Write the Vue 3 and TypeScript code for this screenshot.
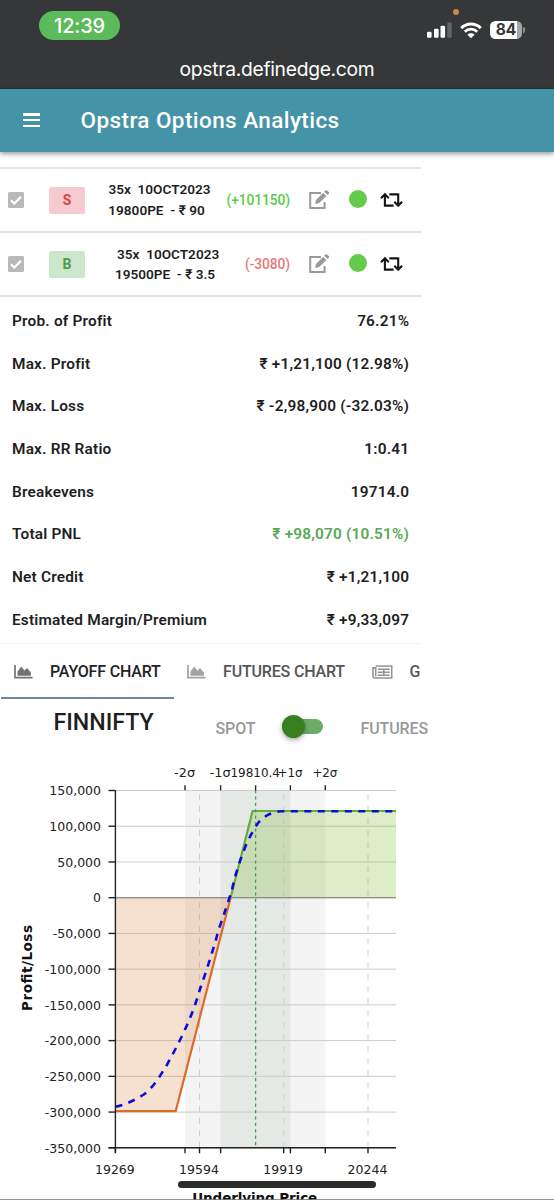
<script setup lang="ts">
interface Leg {
  side: 'S' | 'B'
  expiry: string
  strike: string
  pnl: string
}

interface Stat {
  label: string
  value: string
  gain?: boolean
}

const legs: Leg[] = [
  { side: 'S', expiry: '35x\u00a0 10OCT2023', strike: '19800PE\u00a0 - ₹ 90', pnl: '(+101150)' },
  { side: 'B', expiry: '35x\u00a0 10OCT2023', strike: '19500PE\u00a0 - ₹ 3.5', pnl: '(-3080)' },
]

const stats: Stat[] = [
  { label: 'Prob. of Profit', value: '76.21%' },
  { label: 'Max. Profit', value: '₹ +1,21,100 (12.98%)' },
  { label: 'Max. Loss', value: '₹ -2,98,900 (-32.03%)' },
  { label: 'Max. RR Ratio', value: '1:0.41' },
  { label: 'Breakevens', value: '19714.0' },
  { label: 'Total PNL', value: '₹ +98,070 (10.51%)', gain: true },
  { label: 'Net Credit', value: '₹ +1,21,100' },
  { label: 'Estimated Margin/Premium', value: '₹ +9,33,097' },
]

const yTicks = [150000, 100000, 50000, 0, -50000, -100000, -150000, -200000, -250000, -300000, -350000].map(
  (value, i) => ({ label: value.toLocaleString('en-US'), y: 35.5 + i * 35.73 }),
)

const xTicks = [
  { label: '19269', x: 115.4 },
  { label: '19594', x: 199.5 },
  { label: '19919', x: 283.7 },
  { label: '20244', x: 368 },
]

const sigmas = [
  { label: '-2σ', x: 185, width: 21 },
  { label: '-1σ', x: 220.6, width: 21 },
  { label: '19810.4', x: 255.6, width: 49.5 },
  { label: '+1σ', x: 290.4, width: 25 },
  { label: '+2σ', x: 325.3, width: 25 },
]

const bars = [
  { x: 0, y: 10, h: 6 },
  { x: 7, y: 7, h: 9 },
  { x: 13.5, y: 4, h: 12 },
]
</script>

<template>
  <div class="screen">
    <div class="status">
      <div class="clock">12:39</div>
      <div class="url">opstra.definedge.com</div>
      <i class="mic"></i>
      <div class="indicators">
        <svg class="signal" width="26" height="17" viewBox="0 0 26 17">
          <rect v-for="b in bars" :key="b.x" :x="b.x" :y="b.y - 0.3" width="4.6" :height="b.h" rx="1.3" fill="#fff" />
          <rect x="20.2" y="0.6" width="4.6" height="15.1" rx="1.3" fill="#626365" />
        </svg>
        <svg class="wifi" width="22" height="17" viewBox="0 0 22 17">
          <path d="M1.2 6.1C6.7.6 15.3.6 20.8 6.1" fill="none" stroke="#fff" stroke-width="2.9" />
          <path d="M4.8 9.7c3.5-3.4 8.9-3.4 12.4 0" fill="none" stroke="#fff" stroke-width="2.8" />
          <path d="M11 16.2 7.4 12.7c2.1-1.9 5.1-1.9 7.2 0z" fill="#fff" />
        </svg>
        <div class="battery"><span>84</span></div>
        <i class="nub"></i>
      </div>
    </div>

    <header class="bar">
      <div class="burger"><i></i><i></i><i></i></div>
      <h1>Opstra Options Analytics</h1>
    </header>

    <main class="page">
      <section class="legs">
        <div v-for="leg in legs" :key="leg.side" class="leg" :class="leg.side === 'S' ? 'sell' : 'buy'">
          <span class="check">
            <svg width="16" height="16" viewBox="0 0 16 16">
              <path d="m3 8.3 3.3 3.2L13 4.9" fill="none" stroke="#fff" stroke-width="2.2" />
            </svg>
          </span>
          <span class="side">{{ leg.side }}</span>
          <div class="contract">
            <div class="expiry">{{ leg.expiry }}</div>
            <div class="strike">{{ leg.strike }}</div>
          </div>
          <span class="pnl">{{ leg.pnl }}</span>
          <svg class="edit" width="21" height="20" viewBox="0 0 21 20">
            <path d="M12 3.1H1.2v15h14.4v-6" fill="none" stroke="#999" stroke-width="2" />
            <path d="M6.2 13.9 7 9.9l7.2-7.2 3.2 3.2-7.2 7.2zM15.2 1.8 16.4.6q.9-.8 1.8 0l1.5 1.5q.8.9 0 1.8l-1.2 1.1z" fill="#999" />
          </svg>
          <i class="live"></i>
          <svg class="swap" width="23" height="16" viewBox="0 0 23 16">
            <g fill="none" stroke="#151515" stroke-width="2.1">
              <path d="M1 6.2 4.9 2.2l3.9 4M4.9 3v10.6h8.7" />
              <path d="m14.3 9.8 3.9 4 3.9-4M18.2 13V2.4H9.3" />
            </g>
          </svg>
        </div>
      </section>

      <section class="stats">
        <div v-for="s in stats" :key="s.label" class="stat">
          <span>{{ s.label }}</span>
          <span class="value" :class="{ gain: s.gain }">{{ s.value }}</span>
        </div>
      </section>

      <nav class="tabs">
        <div class="tab active">
          <svg width="19" height="14" viewBox="0 0 19 14">
            <path d="M1 0v12.6h17.6" fill="none" stroke="#737373" stroke-width="1.7" />
            <path d="M3.5 10.8V6.4L7.2 1.4l3.3 4L13 3l3.9 4.6v3.2z" fill="#737373" />
          </svg>
          <span>PAYOFF CHART</span>
        </div>
        <div class="tab second">
          <svg width="19" height="14" viewBox="0 0 19 14">
            <path d="M1 0v12.6h17.6" fill="none" stroke="#a3a3a3" stroke-width="1.7" />
            <path d="M3.5 10.8V6.4L7.2 1.4l3.3 4L13 3l3.9 4.6v3.2z" fill="#a3a3a3" />
          </svg>
          <span>FUTURES CHART</span>
        </div>
        <div class="tab last">
          <svg width="21" height="14" viewBox="0 0 21 14">
            <path
              d="M3.7 1h16v12H2.7Q1 13 1 11.4V2.9h2.7v8.5M5.7 4.2h12M5.7 7.3h12M5.7 10.3h12M11.8 4v6.5"
              fill="none"
              stroke="#949494"
              stroke-width="1.6"
            />
          </svg>
          <span>G</span>
        </div>
      </nav>

      <section class="instrument">
        <h2>FINNIFTY</h2>
        <span class="mode spot">SPOT</span>
        <span class="switch"><i></i></span>
        <span class="mode fut">FUTURES</span>
      </section>

      <svg class="chart" width="430" height="445" viewBox="0 0 430 445">
        <rect x="185" y="35.5" width="140.3" height="357.3" fill="#f4f4f4" />
        <rect x="220.6" y="35.5" width="70" height="357.3" fill="#e4e9e6" />

        <g stroke-width="1">
          <line v-for="t in yTicks" :key="t.y" x1="115" x2="396" :y1="t.y" :y2="t.y" stroke="#cbcdcc" />
        </g>
        <g stroke="#cfcfcf" stroke-dasharray="6 6">
          <line v-for="t in xTicks.slice(1)" :key="t.x" :x1="t.x" :x2="t.x" y1="39" y2="392" />
        </g>

        <path d="M115.4 142.7h115.2L175.7 356H115.4z" fill="#d8782f" fill-opacity=".23" />
        <path d="M230.6 142.7 252.6 56H396v86.7z" fill="#76b82a" fill-opacity=".25" />
        <line x1="115" x2="396" y1="142.7" y2="142.7" stroke="#777" stroke-width="1.1" />
        <path d="M115.4 356.2h60.3l54.9-213.5" fill="none" stroke="#db6b28" stroke-width="2.2" />
        <path d="M230.6 142.7 252.6 56H396" fill="none" stroke="#69ab36" stroke-width="2.2" />
        <line x1="255.6" x2="255.6" y1="35" y2="392" stroke="#4c9a52" stroke-width="1.3" stroke-dasharray="3.2 3.2" />
        <path
          d="M115.4 351.8C126 349.5 135 345 143 340C154 332.5 161 319 166 311.5C179 288 192 263 200 234C206 217 214 193 218.5 175C224 160 228 147 232 135C235 120 240 105 246 90C251 79 255 72 260 65.5C266 60 273 57 281 56.3H396"
          fill="none"
          stroke="#0b0bdb"
          stroke-width="2.6"
          stroke-dasharray="7 6.5"
        />

        <g stroke="#222" stroke-width="1.4">
          <path d="M115.4 35V398M108.5 392.8H396" fill="none" />
          <line v-for="t in yTicks" :key="t.y" x1="108.5" x2="115" :y1="t.y" :y2="t.y" />
          <line v-for="t in xTicks" :key="t.x" :x1="t.x" :x2="t.x" y1="392.8" y2="398.3" />
          <line v-for="s in sigmas" :key="s.x" :x1="s.x" :x2="s.x" y1="30.3" y2="35.3" />
          <line v-for="s in sigmas.filter((q) => q.label !== '19810.4')" :key="s.label" :x1="s.x" :x2="s.x" y1="392.8" y2="398.3" />
        </g>

        <g class="axis">
          <text v-for="t in yTicks" :key="t.y" x="101" :y="t.y + 4.7" text-anchor="end">{{ t.label }}</text>
          <text v-for="t in xTicks" :key="t.x" :x="t.x - 0.5" y="418.7" text-anchor="middle">{{ t.label }}</text>
          <text
            v-for="s in sigmas"
            :key="s.x"
            :x="s.x - 0.4"
            y="22.3"
            text-anchor="middle"
            :textLength="s.width"
            lengthAdjust="spacingAndGlyphs"
          >{{ s.label }}</text>
        </g>
        <text class="axis-title" transform="translate(31.5 213) rotate(-90)" text-anchor="middle" textLength="86">Profit/Loss</text>
        <text class="axis-title" x="254.7" y="448" text-anchor="middle" textLength="125">Underlying Price</text>
        <line x1="0" x2="554" y1="444.5" y2="444.5" stroke="#777" stroke-width=".8" />
      </svg>
    </main>
    <i class="home"></i>
  </div>
</template>

<style>
body {
  margin: 0;
  background: #fff;
}
</style>

<style scoped>
.screen {
  position: relative;
  width: 554px;
  height: 1200px;
  overflow: hidden;
  background: #fff;
  color: #1f1f1f;
  font-family: Roboto, 'Noto Sans', sans-serif;
}
.status {
  position: relative;
  box-sizing: border-box;
  height: 89px;
  padding-top: 11px;
  background: #363739;
  border-bottom: 1px solid #25333a;
  color: #fff;
}
.clock {
  width: 81px;
  height: 29px;
  margin-left: 39px;
  border-radius: 15px;
  background: #5bba5a;
  font: 500 20px/30px Inter, sans-serif;
  letter-spacing: -0.2px;
  text-align: center;
}
.url {
  margin-top: 17px;
  font: 400 19.3px/24px Inter, sans-serif;
  letter-spacing: -0.3px;
  text-align: center;
}
.mic {
  position: absolute;
  left: 453px;
  top: 8.5px;
  width: 6px;
  height: 6px;
  border-radius: 50%;
  background: #cd893f;
}
.indicators {
  position: absolute;
  left: 427px;
  top: 21px;
  display: flex;
  align-items: center;
}
.wifi {
  margin-left: 7px;
}
.battery {
  width: 32px;
  height: 18px;
  margin-left: 8px;
  border-radius: 5.5px;
  background: linear-gradient(90deg, #fff 84%, #a6a6a8 84%);
  color: #363739;
  font: 700 15.5px/18.5px Inter, sans-serif;
  text-align: center;
}
.nub {
  width: 2px;
  height: 6px;
  margin-left: 1px;
  border-radius: 0 2px 2px 0;
  background: #939395;
}
.bar {
  position: relative;
  z-index: 1;
  display: flex;
  align-items: center;
  height: 62.5px;
  padding-left: 23px;
  background: #4493a7;
  box-shadow: 0 2px 5px rgba(0, 0, 0, 0.4);
  color: #fff;
}
.burger {
  display: grid;
  gap: 3.2px;
  width: 16.5px;
}
.burger i {
  height: 2.4px;
  background: #fff;
}
h1 {
  margin: 0 0 0 41px;
  font-size: 22.5px;
  font-weight: 500;
  letter-spacing: 0.42px;
}
.page {
  box-sizing: border-box;
  width: 421px;
  padding-top: 15.5px;
}
.legs {
  border-top: 2px solid #e6e6e6;
}
.leg {
  display: grid;
  grid-template-columns: 16px 25px 36px 13px 120px 72px 19px 21px 19px 18px 13px 23px;
  align-items: center;
  box-sizing: border-box;
  height: 64.2px;
  padding-left: 8px;
  border-bottom: 2px solid #e2e2e2;
}
.check {
  grid-column: 1;
  width: 16px;
  height: 16px;
  border-radius: 1.5px;
  background: #b9b9b9;
}
.check svg {
  display: block;
}
.side {
  grid-column: 3;
  border-radius: 2px;
  font-size: 14px;
  font-weight: 700;
  line-height: 27px;
  text-align: center;
}
.sell .side {
  background: #f6cbd0;
  color: #d94343;
}
.buy .side {
  background: #cbe6cb;
  color: #4d9f50;
}
.contract {
  grid-column: 5;
  padding-left: 3px;
  font-size: 13.6px;
  font-weight: 600;
  line-height: 20.7px;
  text-align: center;
  white-space: nowrap;
}
.sell .strike {
  padding-right: 6px;
}
.buy .contract {
  padding-left: 14px;
}
.buy .expiry {
  padding-left: 5px;
}
.pnl {
  grid-column: 6;
  text-align: right;
  font-size: 13.8px;
  font-weight: 500;
  letter-spacing: -0.1px;
  white-space: nowrap;
}
.sell .pnl {
  color: #5acb45;
}
.buy .pnl {
  color: #e57979;
}
.edit {
  grid-column: 8;
}
.live {
  grid-column: 10;
  width: 18px;
  height: 18px;
  margin-top: -2px;
  border-radius: 50%;
  background: #64ca4b;
}
.swap {
  grid-column: 12;
}
.stats {
  box-sizing: border-box;
  height: 346.6px;
  padding: 2.5px 12px 0;
  border-bottom: 1px solid #f4f4f4;
}
.stat {
  display: flex;
  justify-content: space-between;
  height: 42.7px;
  font-size: 15.4px;
  font-weight: 600;
  letter-spacing: 0.19px;
  line-height: 42.7px;
  white-space: nowrap;
}
.value {
  margin-right: -0.2px;
}
.gain {
  color: #59a955;
}
.tabs {
  display: flex;
  height: 55px;
  overflow: hidden;
  color: #555;
}
.tab {
  display: flex;
  flex: none;
  align-items: center;
  box-sizing: border-box;
  width: 173px;
  padding: 3px 0 0 14px;
  border-bottom: 2px solid transparent;
  font-size: 16px;
  font-weight: 500;
  letter-spacing: -0.17px;
  white-space: nowrap;
}
.tab.active {
  margin-left: 1px;
  padding-left: 13px;
  border-color: #71889a;
  color: #222;
}
.tab span {
  margin-left: 17px;
}
.tab.second {
  padding-left: 13px;
}
.tab.last {
  padding-left: 24.5px;
}
.instrument {
  display: flex;
  align-items: center;
  width: 430px;
  height: 56px;
}
h2 {
  width: 108px;
  margin: -10px 54px 0 53.5px;
  font-size: 23.2px;
  font-weight: 500;
}
.mode {
  margin-top: 4px;
  color: #999;
  font-size: 16px;
  font-weight: 500;
  letter-spacing: -0.1px;
}
.spot {
  width: 66px;
}
.switch {
  position: relative;
  width: 41px;
  height: 15px;
  border-radius: 8px;
  background: #6bad68;
}
.switch i {
  position: absolute;
  left: 0;
  top: -4px;
  width: 23px;
  height: 23px;
  border-radius: 50%;
  background: #38801f;
  box-shadow: 0 2px 5px rgba(0, 0, 0, 0.35);
}
.fut {
  margin-left: 38px;
}
.chart {
  display: block;
  overflow: visible;
}
.axis {
  fill: #222;
  font: 12.5px 'DejaVu Sans', sans-serif;
}
.axis-title {
  fill: #111;
  font: bold 13.5px 'DejaVu Sans', sans-serif;
}
.home {
  position: absolute;
  left: 178px;
  top: 1180.5px;
  width: 198px;
  height: 7.5px;
  border-radius: 4px;
  background: #2a2c2a;
}
</style>
